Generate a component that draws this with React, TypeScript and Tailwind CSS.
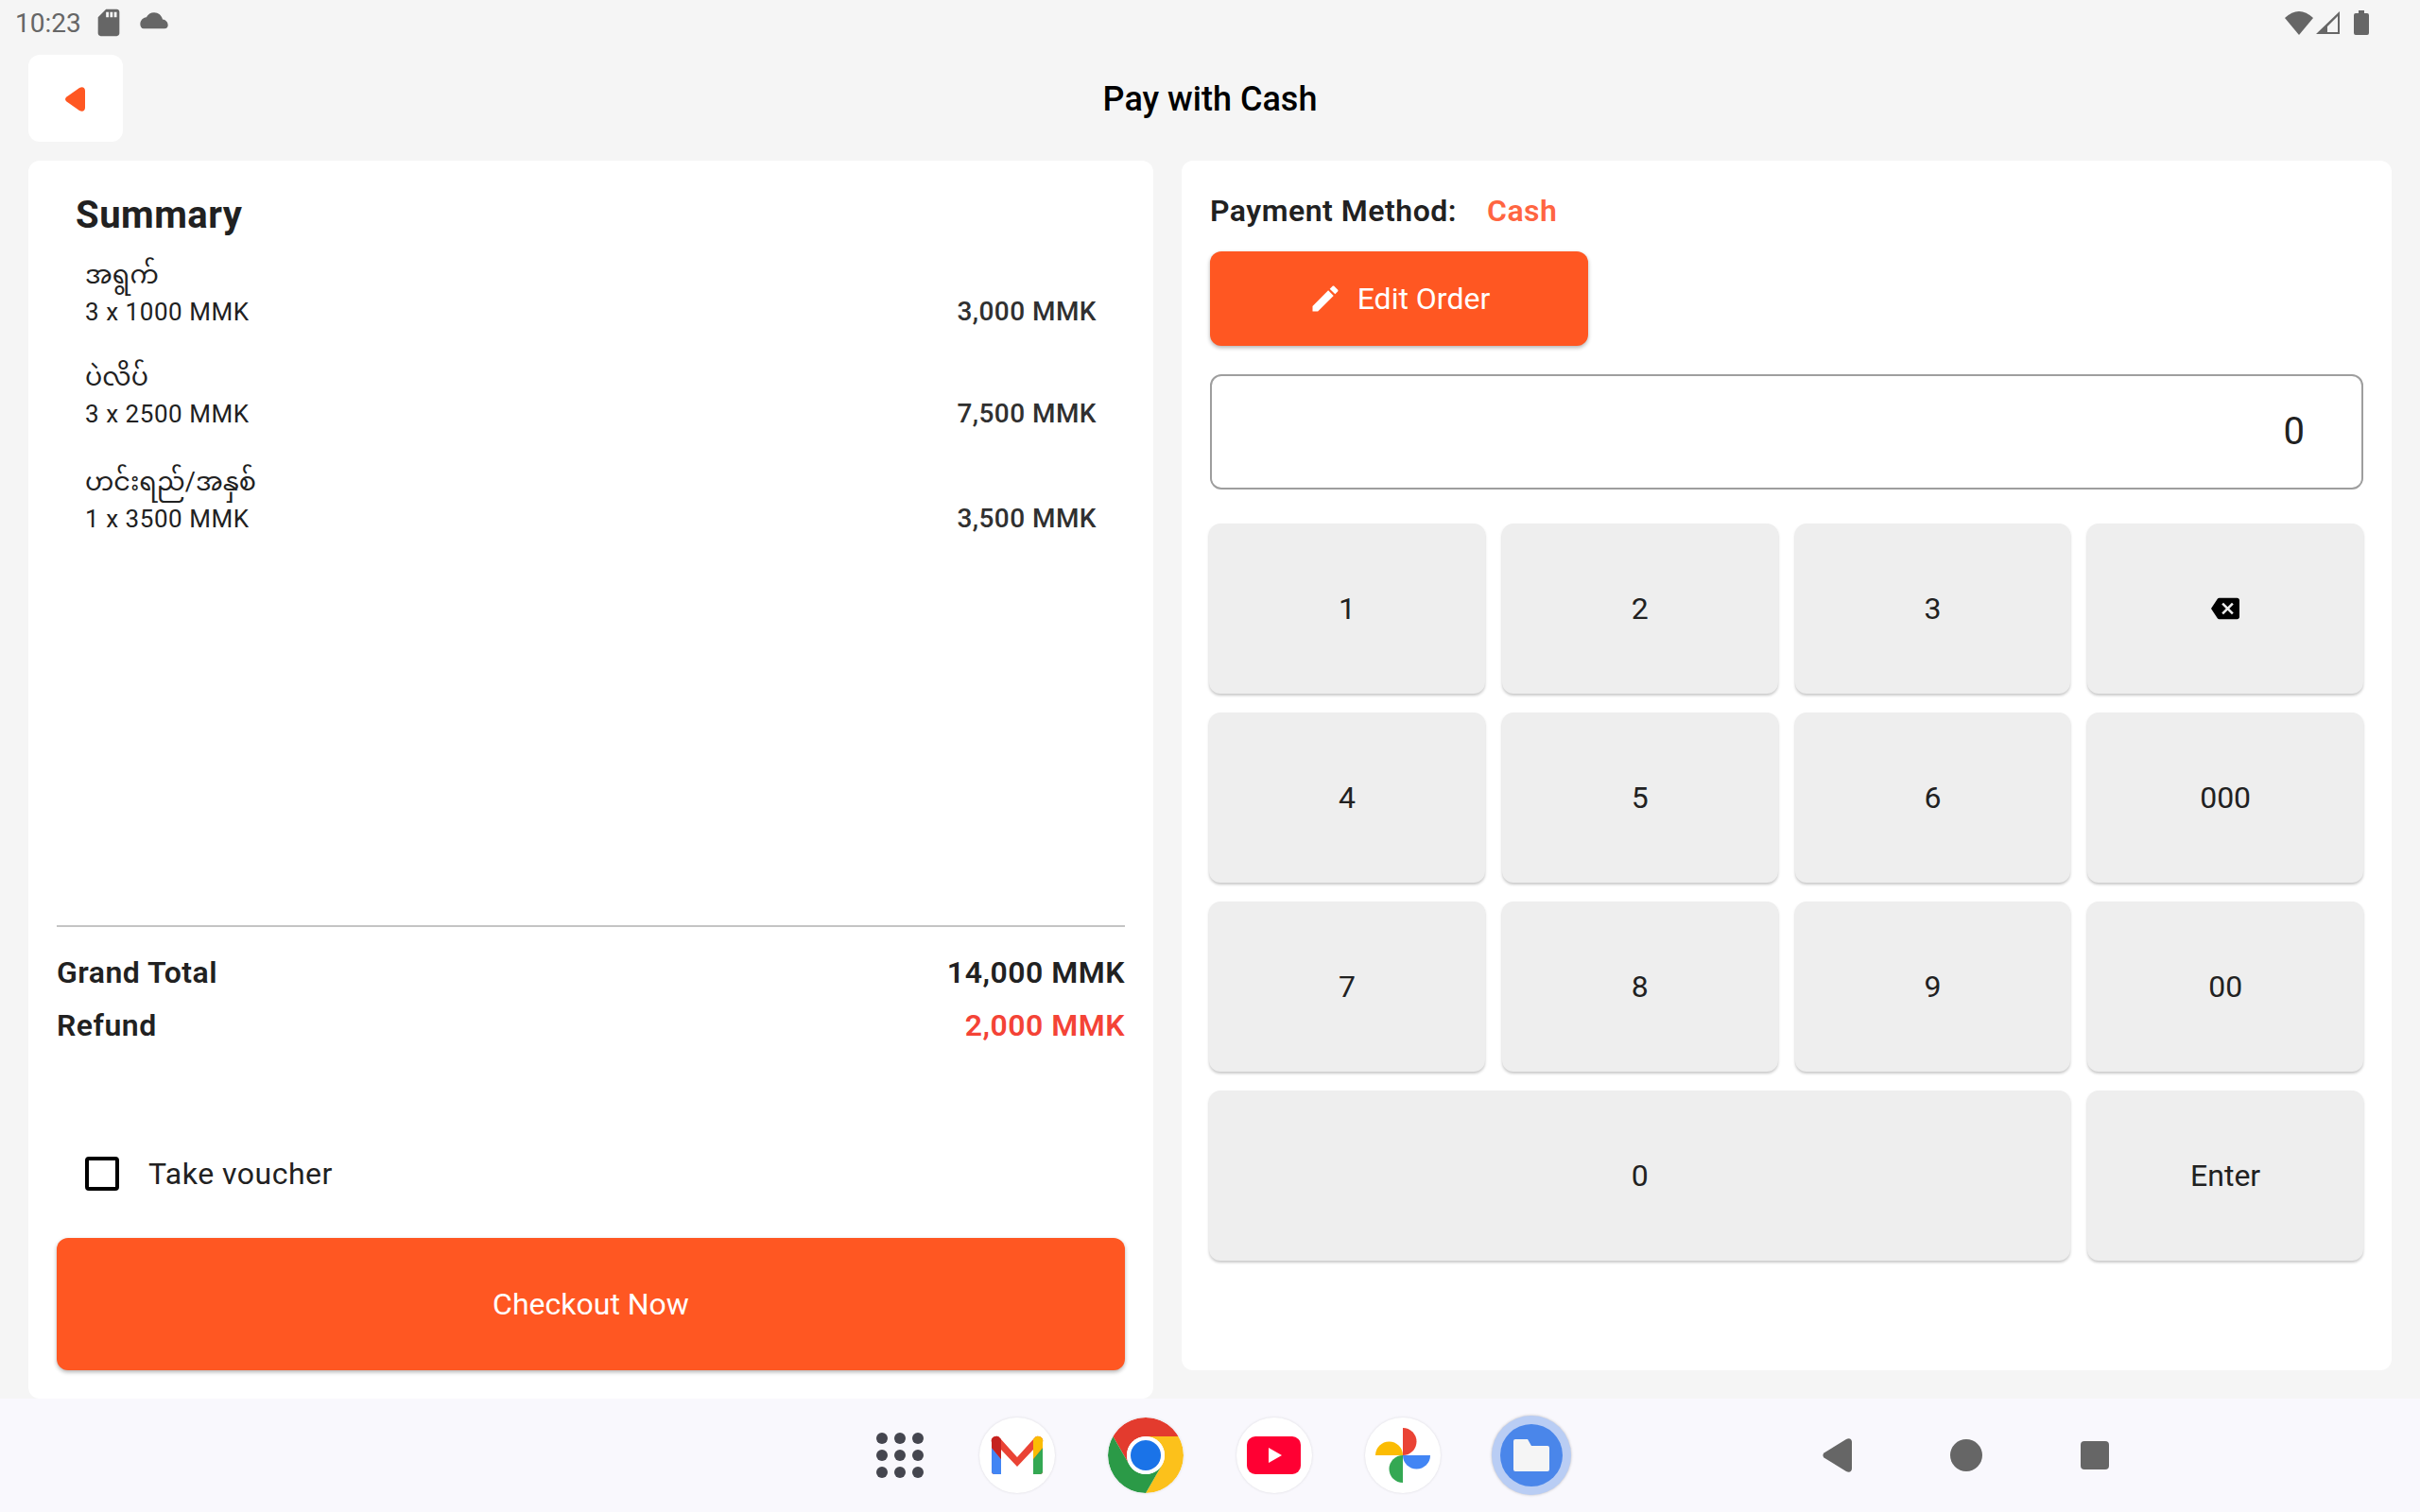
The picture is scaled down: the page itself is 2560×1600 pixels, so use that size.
const font = { fontFamily: "Roboto, 'Noto Sans Myanmar', 'Noto Sans', sans-serif" };

const items = [
  { name: "အရွက်", qty: "3 x 1000 MMK", price: "3,000 MMK", gap: "" },
  { name: "ပဲလိပ်", qty: "3 x 2500 MMK", price: "7,500 MMK", gap: "" },
  { name: "ဟင်းရည်/အနှစ်", qty: "1 x 3500 MMK", price: "3,500 MMK", gap: "mt-[3px]" },
];

// Android status bar
const StatusBar = () => (
  <div className="flex h-[48px] items-center justify-between pl-[16px] pr-[54px] text-[#666666]">
    <div className="flex items-center">
      <span className="mt-[2px] text-[28px] leading-none">10:23</span>
      <svg className="ml-[12px]" width="34" height="34" viewBox="0 0 24 24" fill="#666666">
        <path d="M18 2h-8L4.02 8 4 20c0 1.1.9 2 2 2h12c1.1 0 2-.9 2-2V4c0-1.1-.9-2-2-2zm-6 6h-2V4h2v4zm3 0h-2V4h2v4zm3 0h-2V4h2v4z" />
      </svg>
      <svg className="ml-[15px] mb-[2px]" width="32" height="22" viewBox="0 3 24 18" fill="#666666">
        <path d="M19.35 10.04C18.67 6.59 15.64 4 12 4 9.11 4 6.6 5.64 5.35 8.04 2.34 8.36 0 10.91 0 14c0 2 1 4 3 4h18c2 0 3-1.5 3-3 0-2.64-2.05-4.78-4.65-4.96z" />
      </svg>
    </div>
    <div className="flex items-center">
      <svg width="30" height="26" viewBox="0 0 30 26" fill="#666666">
        <path d="M0 8 Q15 -6 30 8 L15 26 Z" />
      </svg>
      <svg className="ml-[3px]" width="26" height="26" viewBox="0 0 26 26" fill="#666666">
        <path fillRule="evenodd" d="M0 25 L25 1 V25 Z M12 23 H23 V6 L12 17 Z" />
      </svg>
      <svg className="ml-[14px]" width="16" height="26" viewBox="0 0 16 26" fill="#666666">
        <path d="M5 0h6v3h3a2 2 0 0 1 2 2v19a2 2 0 0 1-2 2H2a2 2 0 0 1-2-2V5a2 2 0 0 1 2-2h3z" />
      </svg>
    </div>
  </div>
);

const Header = () => (
  <div className="relative mt-[10px] flex h-[92px] items-center justify-center px-[30px]">
    <button className="absolute left-[30px] top-0 flex h-[92px] w-[100px] items-center justify-center rounded-[12px] bg-white">
      <svg className="mt-[2px]" width="22" height="26" viewBox="0 0 22 26" fill="#ff5722">
        <path d="M1.5 10.5 L15 1 C18 -0.8 21 0.5 21 4 V22 C21 25.5 18 26.8 15 25 L1.5 15.5 C-0.5 14 -0.5 12 1.5 10.5 Z" />
      </svg>
    </button>
    <h1 className="mt-[2px] text-[36px] font-medium text-black">Pay with Cash</h1>
  </div>
);

const SummaryCard = () => (
  <div className="flex h-[1310px] w-[1190px] flex-col rounded-[12px] bg-white px-[30px]">
    <h2 className="ml-[20px] mt-[32px] h-[52px] text-[40px] font-bold leading-[52px] tracking-[0.5px] text-[#212121]">Summary</h2>
    <div className="mt-[16px] flex flex-col">
      {items.map((item, i) => (
        <div key={i} className={`flex h-[108px] items-end justify-between pb-[30px] pl-[30px] pr-[30px] ${item.gap}`}>
          <div className="flex flex-col text-[#212121]">
            <span className="text-[27px] leading-[42px]">{item.name}</span>
            <span className="text-[26px] leading-[36px] tracking-[0.55px]">{item.qty}</span>
          </div>
          <span className="text-[28px] font-medium leading-[36px] tracking-[0.45px] text-[#303030]">{item.price}</span>
        </div>
      ))}
    </div>
    <div className="mt-[382px] h-[2px] bg-[#c4c4c4]" />
    <div className="mt-[20px] flex h-[56px] items-center justify-between text-[32px] font-semibold tracking-[0.5px] text-[#212121]">
      <span>Grand Total</span>
      <span>14,000 MMK</span>
    </div>
    <div className="flex h-[56px] items-center justify-between text-[32px] font-semibold tracking-[0.5px]">
      <span className="text-[#212121]">Refund</span>
      <span className="text-[#f44336]">2,000 MMK</span>
    </div>
    <div className="mt-[109px] flex h-[40px] items-center pl-[30px]">
      <div className="h-[36px] w-[36px] rounded-[4px] border-[4px] border-black" />
      <span className="ml-[31px] text-[32px] tracking-[0.5px] text-[#212121]">Take voucher</span>
    </div>
    <button className="mt-[48px] h-[140px] w-full rounded-[12px] bg-[#ff5722] text-[32px] text-white shadow-[0_2px_4px_rgba(0,0,0,0.3)]">
      Checkout Now
    </button>
  </div>
);

const Key = ({ children, wide }: { children: React.ReactNode; wide?: boolean }) => (
  <button
    className={`flex items-center justify-center rounded-[12px] bg-[#eeeeee] text-[32px] text-[#212121] shadow-[0_2px_3px_rgba(0,0,0,0.22)] ${
      wide ? "col-span-3" : ""
    }`}
  >
    {children}
  </button>
);

const BackspaceIcon = () => (
  <svg width="30" height="30" viewBox="0 0 24 24" fill="#000000">
    <path d="M22 3H7c-.69 0-1.23.35-1.59.88L0 12l5.41 8.11c.36.53.9.89 1.59.89h15c1.1 0 2-.9 2-2V5c0-1.1-.9-2-2-2zm-3 12.59L17.59 17 14 13.41 10.41 17 9 15.59 12.59 12 9 8.41 10.41 7 14 10.59 17.59 7 19 8.41 15.41 12 19 15.59z" />
  </svg>
);

const PaymentCard = () => (
  <div className="flex h-[1280px] w-[1280px] flex-col rounded-[12px] bg-white pl-[30px] pr-[30px]">
    <div className="mt-[32px] flex h-[42px] items-center text-[32px] font-semibold tracking-[0.5px]">
      <span className="text-[#212121]">Payment Method:</span>
      <span className="ml-[32px] text-[#ff6541]">Cash</span>
    </div>
    <button className="mt-[22px] flex h-[100px] w-[400px] items-center justify-center rounded-[12px] bg-[#ff5722] text-[32px] text-white shadow-[0_2px_4px_rgba(0,0,0,0.3)]">
      <svg width="36" height="36" viewBox="0 0 24 24" fill="#ffffff">
        <path d="M3 17.25V21h3.75L17.81 9.94l-3.75-3.75L3 17.25zM20.71 7.04c.39-.39.39-1.02 0-1.41l-2.34-2.34c-.39-.39-1.02-.39-1.41 0l-1.83 1.83 3.75 3.75 1.83-1.83z" />
      </svg>
      <span className="ml-[16px]">Edit Order</span>
    </button>
    <div className="mt-[30px] flex h-[122px] items-center justify-end rounded-[12px] border-2 border-[#9e9e9e] pr-[60px] text-[40px] text-[#212121]">
      0
    </div>
    <div className="ml-[-1px] mt-[36px] grid grid-cols-4 auto-rows-[180px] gap-x-[18px] gap-y-[20px]">
      <Key>1</Key>
      <Key>2</Key>
      <Key>3</Key>
      <Key><BackspaceIcon /></Key>
      <Key>4</Key>
      <Key>5</Key>
      <Key>6</Key>
      <Key>000</Key>
      <Key>7</Key>
      <Key>8</Key>
      <Key>9</Key>
      <Key>00</Key>
      <Key wide>0</Key>
      <Key>Enter</Key>
    </div>
  </div>
);

const AppCircle = ({ children }: { children: React.ReactNode }) => (
  <div className="flex w-[136px] justify-center">
    <div className="h-[80px] w-[80px] overflow-hidden rounded-full bg-white shadow-[0_0_3px_rgba(0,0,0,0.12)]">
      <svg width="80" height="80" viewBox="0 0 80 80">{children}</svg>
    </div>
  </div>
);

const Dock = () => (
  <div className="flex h-[120px] items-center bg-[#f9f8fd]">
    <div className="ml-[924px] grid w-[56px] grid-cols-3 justify-items-center gap-y-[6px]">
      {[0, 1, 2, 3, 4, 5, 6, 7, 8].map((d) => (
        <div key={d} className="h-[12px] w-[12px] rounded-full bg-[#45464f]" />
      ))}
    </div>
    <div className="ml-[28px] flex items-center">
      <AppCircle>
        <path d="M13 26 a5 5 0 0 1 9-4 L40 42 L58 22 a5 5 0 0 1 9 4 V57 a3 3 0 0 1-3 3 H57 V34 L40 52 L23 34 V60 H16 a3 3 0 0 1-3-3 Z" fill="#ea4335" />
        <path d="M13 32 L23 44 V60 H16 a3 3 0 0 1-3-3 Z" fill="#4285f4" />
        <path d="M67 32 L57 44 V60 H64 a3 3 0 0 0 3-3 Z" fill="#34a853" />
        <path d="M13 26 a5 5 0 0 1 9-4 L23 23 V44 L13 32 Z" fill="#c5221f" />
        <path d="M67 26 a5 5 0 0 0-9-4 L57 23 V44 L67 32 Z" fill="#fbbc04" />
      </AppCircle>
      <AppCircle>
        <path d="M40 0 A40 40 0 0 1 74.64 20 H40 A20 20 0 0 0 22.68 50 L5.36 20 A40 40 0 0 1 40 0Z" fill="#e33b2e" />
        <path d="M74.64 20 A40 40 0 0 1 40 80 L57.32 50 A20 20 0 0 0 40 20 Z" fill="#fcc11b" />
        <path d="M5.36 20 A40 40 0 0 0 40 80 L57.32 50 A20 20 0 0 1 22.68 50Z" fill="#2b9a47" />
        <circle cx="40" cy="40" r="20" fill="#ffffff" />
        <circle cx="40" cy="40" r="16" fill="#1a73e8" />
      </AppCircle>
      <AppCircle>
        <rect x="11" y="20" width="57" height="40" rx="9" fill="#ff0033" />
        <path d="M34 32 L48 40 L34 48 Z" fill="#ffffff" />
      </AppCircle>
      <AppCircle>
        <path d="M40 11 A14.5 14.5 0 0 1 40 40 Z" fill="#ea4335" />
        <path d="M11 40 A14.5 14.5 0 0 1 40 40 Z" fill="#fbbc04" />
        <path d="M40 40 A14.5 14.5 0 0 0 40 69 Z" fill="#34a853" />
        <path d="M40 40 A14.5 14.5 0 0 0 69 40 Z" fill="#4285f4" />
      </AppCircle>
      <div className="flex w-[136px] justify-center">
        <div className="flex h-[84px] w-[84px] items-center justify-center rounded-full bg-[#b9cdf4] shadow-[0_0_3px_rgba(0,0,0,0.25)]">
          <div className="flex h-[66px] w-[66px] items-center justify-center rounded-full bg-[#4a86ea]">
            <svg width="38" height="34" viewBox="0 0 38 34" fill="#f5f5f5">
              <path d="M2 0 H15 L19 7 H36 a2 2 0 0 1 2 2 V32 a2 2 0 0 1-2 2 H2 a2 2 0 0 1-2-2 V2 a2 2 0 0 1 2-2 Z" />
            </svg>
          </div>
        </div>
      </div>
    </div>
    <div className="ml-[188px] flex items-center">
      <div className="flex w-[136px] justify-center">
        <svg width="32" height="36" viewBox="0 0 32 36" fill="#666666">
          <path d="M1.5 15.5 L25 1 C28 -0.8 31 0.5 31 4 V32 C31 35.5 28 36.8 25 35 L1.5 20.5 C0 19 0 17 1.5 15.5 Z" />
        </svg>
      </div>
      <div className="flex w-[136px] justify-center">
        <div className="h-[34px] w-[34px] rounded-full bg-[#666666]" />
      </div>
      <div className="flex w-[136px] justify-center">
        <div className="h-[30px] w-[30px] rounded-[4px] bg-[#666666]" />
      </div>
    </div>
  </div>
);

export default function App() {
  return (
    <div className="flex h-[1600px] w-[2560px] flex-col overflow-hidden bg-[#f5f5f5]" style={font}>
      <StatusBar />
      <Header />
      <div className="mt-[20px] flex flex-1 gap-[30px] px-[30px]">
        <SummaryCard />
        <PaymentCard />
      </div>
      <Dock />
    </div>
  );
}
